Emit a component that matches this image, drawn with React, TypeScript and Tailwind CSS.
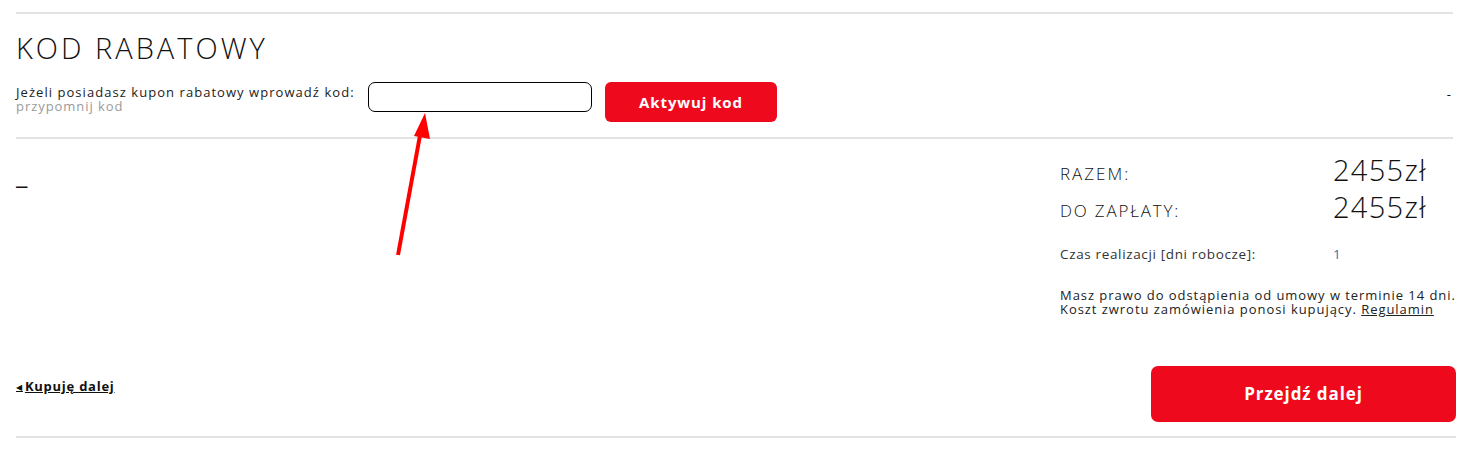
import React from "react"

const font = { fontFamily: '"Open Sans", "DejaVu Sans", sans-serif' }

export default function App() {
  return (
    <div className="relative w-[1469px] h-[471px] bg-white text-[#111]" style={font}>
      <div className="px-4 pt-3">
        <div className="w-[1437px] border-t-2 border-[#e3e3e3]" />

        <h2 className="mt-[17px] text-[29px] font-light leading-[34px] tracking-[3px] text-[#111]">KOD RABATOWY</h2>

        <div className="mt-[17px] flex items-start">
          <div className="w-[352px] whitespace-nowrap pt-[3px] text-[13px] leading-[14px] tracking-[1.05px] text-[#222]">
            <div>Jeżeli posiadasz kupon rabatowy wprowadź kod:</div>
            <div className="tracking-[0.95px] text-[#9a9a9a]">przypomnij kod</div>
          </div>
          <input className="h-[30px] w-[224px] rounded-[7px] border border-black outline-none" />
          <button className="ml-[13px] h-[40px] w-[172px] rounded-[6px] bg-[#ee0a1c] text-[15px] font-bold tracking-[0.9px] text-white">
            Aktywuj kod
          </button>
          <div className="ml-auto mr-[2px] mt-[5px] text-[13px] leading-[14px]">-</div>
        </div>

        <div className="mt-[15px] w-[1437px] border-t-2 border-[#e3e3e3]" />

        <div className="flex">
          <div className="flex-1 pt-[22px] text-[26px] leading-none">_</div>
          <div className="mr-[-3px] w-[396px] whitespace-nowrap pt-[16px]">
            <div className="flex items-end">
              <span className="w-[273px] pb-[1px] text-[17px] font-light leading-[20px] tracking-[2px]">RAZEM:</span>
              <span className="text-[29px] font-light leading-[30px] tracking-[1.3px]">2455zł</span>
            </div>
            <div className="mt-[7px] flex items-end">
              <span className="w-[273px] pb-[1px] text-[17px] font-light leading-[20px] tracking-[1.8px]">DO ZAPŁATY:</span>
              <span className="text-[29px] font-light leading-[30px] tracking-[1.3px]">2455zł</span>
            </div>
            <div className="mt-[24px] flex text-[13.5px] leading-[16px] tracking-[0.65px] text-[#333]">
              <span className="w-[273px]">Czas realizacji [dni robocze]:</span>
              <span className="text-[#3a6fa8]">1</span>
            </div>
            <div className="mt-[26px] text-[13px] leading-[14px] tracking-[0.95px] text-[#222]">
              <div>Masz prawo do odstąpienia od umowy w terminie 14 dni.</div>
              <div>
                Koszt zwrotu zamówienia ponosi kupujący. <a className="underline">Regulamin</a>
              </div>
            </div>
          </div>
        </div>

        <div className="mt-[50px] flex items-start">
          <a className="mt-[11px] flex items-center text-[13px] font-bold tracking-[0.75px] underline">
            <span className="mr-[2px] text-[8px] no-underline">◀</span>Kupuję dalej
          </a>
          <button className="ml-auto mr-[-3px] h-[56px] w-[305px] rounded-[7px] bg-[#ee0a1c] text-[17px] font-bold tracking-[0.9px] text-white">
            Przejdź dalej
          </button>
        </div>

        <div className="mt-[14px] w-[1440px] border-t-2 border-[#e3e3e3]" />
      </div>

      <svg className="pointer-events-none absolute left-0 top-0" width="1469" height="471">
        <line x1="398" y1="255" x2="421" y2="130" stroke="#ff0000" strokeWidth="4" />
        <polygon points="425,113 414,136 430,139" fill="#ff0000" />
      </svg>
    </div>
  )
}
